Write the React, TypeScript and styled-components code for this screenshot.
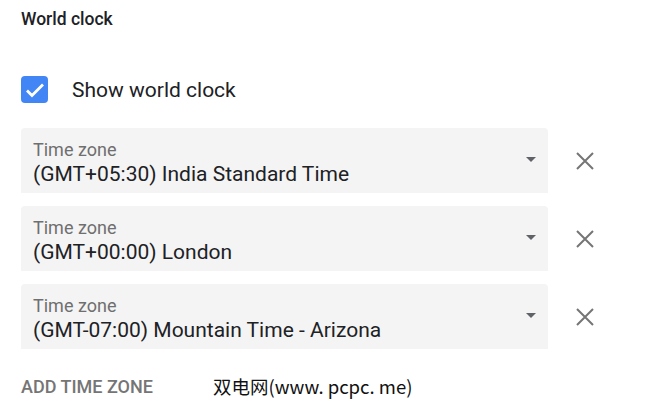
import React from 'react';
import styled, { createGlobalStyle } from 'styled-components';

const Global = createGlobalStyle`
  body {
    margin: 0;
    background: #fff;
    font-family: Roboto, "Noto Sans", sans-serif;
  }
`;

const Page = styled.div`
  width: 670px;
  height: 413px;
  padding: 8px 0 0 21px;
  box-sizing: border-box;
  display: flex;
  flex-direction: column;
`;

const Title = styled.h2`
  margin: 0;
  font-size: 17.5px;
  line-height: 22px;
  font-weight: 500;
  color: #202124;
`;

const CheckRow = styled.label`
  display: flex;
  align-items: center;
  gap: 24px;
  margin-top: 46px;
  height: 27px;
`;

const Box = styled.span`
  width: 27px;
  height: 27px;
  border-radius: 4px;
  background: #4285f4;
  display: flex;
  align-items: center;
  justify-content: center;
`;

const CheckLabel = styled.span`
  font-size: 21px;
  color: #202124;
`;

const List = styled.div`
  display: flex;
  flex-direction: column;
  gap: 13px;
  margin-top: 25px;
`;

const Row = styled.div`
  display: flex;
  align-items: center;
`;

const Field = styled.div`
  width: 527px;
  height: 65px;
  box-sizing: border-box;
  background: #f4f4f4;
  border-radius: 4px 4px 0 0;
  padding: 4px 12px 0 12px;
  display: flex;
  align-items: center;
`;

const FieldText = styled.div`
  flex: 1;
  display: flex;
  flex-direction: column;
`;

const FieldLabel = styled.span`
  font-size: 18px;
  line-height: 22px;
  color: #6f6f6f;
`;

const FieldValue = styled.span`
  font-size: 21px;
  line-height: 26px;
  color: #202124;
`;

const Caret = styled.span`
  width: 0;
  height: 0;
  border-left: 5px solid transparent;
  border-right: 5px solid transparent;
  border-top: 5px solid #5f6368;
  margin: 0 0 6px 0;
`;

const Close = styled.button`
  border: none;
  background: none;
  padding: 0;
  margin-left: 28px;
  width: 18px;
  height: 18px;
  display: flex;
  align-items: center;
  justify-content: center;
`;

const Footer = styled.div`
  display: flex;
  align-items: center;
  margin-top: 24px;
`;

const AddButton = styled.span`
  font-size: 18px;
  font-weight: 500;
  color: #757575;
  width: 192px;
`;

const Watermark = styled.span`
  font-size: 18.5px;
  color: #111;
  font-family: "Noto Sans CJK SC", "DejaVu Sans", sans-serif;
`;

const zones = [
  '(GMT+05:30) India Standard Time',
  '(GMT+00:00) London',
  '(GMT-07:00) Mountain Time - Arizona',
];

export default function App() {
  return (
    <>
      <Global />
      <Page>
        <Title>World clock</Title>
        <CheckRow>
          <Box>
            <svg width="24" height="24" viewBox="0 0 24 24">
              <path d="M4 12.5l5 5L20 6.5" fill="none" stroke="#fff" strokeWidth="2.8" />
            </svg>
          </Box>
          <CheckLabel>Show world clock</CheckLabel>
        </CheckRow>
        <List>
          {zones.map((z) => (
            <Row key={z}>
              <Field>
                <FieldText>
                  <FieldLabel>Time zone</FieldLabel>
                  <FieldValue>{z}</FieldValue>
                </FieldText>
                <Caret />
              </Field>
              <Close aria-label="Remove">
                <svg width="18" height="18" viewBox="0 0 18 18">
                  <path d="M1 1L17 17M17 1L1 17" stroke="#757575" strokeWidth="2" />
                </svg>
              </Close>
            </Row>
          ))}
        </List>
        <Footer>
          <AddButton>ADD TIME ZONE</AddButton>
          <Watermark>双电网(www. pcpc. me)</Watermark>
        </Footer>
      </Page>
    </>
  );
}
